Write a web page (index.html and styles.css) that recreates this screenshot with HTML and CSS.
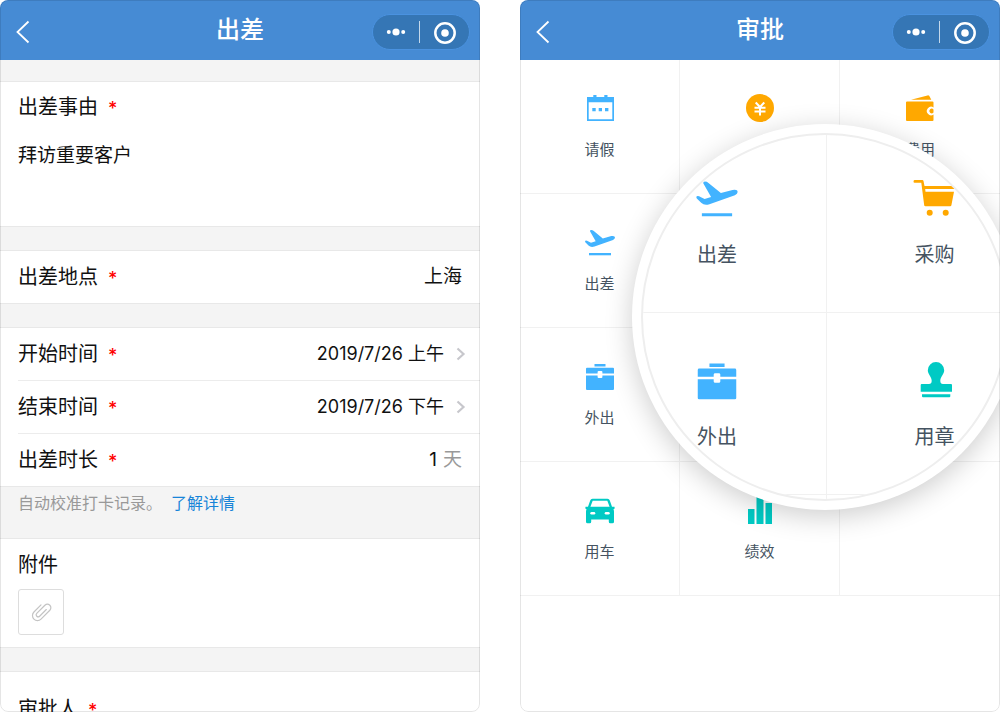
FILE: index.html
```html
<!DOCTYPE html>
<html lang="zh-CN">
<head>
<meta charset="utf-8">
<meta name="viewport" content="width=device-width, initial-scale=1">
<title>审批</title>
<link rel="stylesheet" href="styles.css">
</head>
<body>
<svg class="symbols" aria-hidden="true">
  <symbol id="back" viewBox="0 0 14 24"><path d="M12.500 1.500 1.500 12l11 10.500" fill="none" stroke="currentColor" stroke-width="1.800"/></symbol>
  <symbol id="more" viewBox="0 0 20 8"><circle cx="2.800" cy="4" r="2"/><circle cx="10" cy="4" r="3.600"/><circle cx="17.200" cy="4" r="2"/></symbol>
  <symbol id="target" viewBox="0 0 24 24"><circle cx="12" cy="12" r="9.700" fill="none" stroke="currentColor" stroke-width="2.500"/><circle cx="12" cy="12" r="3.800"/></symbol>
  <symbol id="next" viewBox="0 0 10 14"><path d="M1.500 1.500 7.500 7l-6 5.500" fill="none" stroke="currentColor" stroke-width="2.200"/></symbol>
  <symbol id="clip" viewBox="0 0 24 24"><g transform="rotate(45 12 12)" fill="none" stroke="currentColor" stroke-width="1.200" stroke-linecap="round"><path d="M7 7v10a5 5 0 0 0 10 0V4.500a3.500 3.500 0 0 0-7 0V16a2 2 0 0 0 4 0V6.500"/></g></symbol>
  <symbol id="calendar" viewBox="0 0 32 32"><path fill-rule="evenodd" d="M3 5h6.300V3h3.200v2h7.800V3h3.200v2H30v24H3zM4.700 10.300v17h23.600v-17z"/><path d="M8.300 16h3.400v3.300H8.300zM14.700 16H18v3.300h-3.300zM21 16h3.400v3.300H21z"/></symbol>
  <symbol id="yen" viewBox="0 0 32 32"><circle cx="16" cy="16" r="14"/><path d="M11.700 10.500 16 15l4.300-4.500M10.500 15.700h11M10.500 19.500h11M16 15v8.500" fill="none" stroke="#fff" stroke-width="2"/></symbol>
  <symbol id="wallet" viewBox="0 0 32 32"><path d="M7 7.700 23.500 3.400q1-.3 1.700.4l2.100 3.900z"/><path d="M3 9.500h25.500q1 0 1 1v4.900a4.300 4.300 0 1 0 0 7.200V28q0 1-1 1H3q-1 0-1-1V10.500q0-1 1-1z"/><path d="M29.500 17.600v2.800a2.300 2.300 0 1 1 0-2.800z"/></symbol>
  <symbol id="plane" viewBox="0 0 32 32"><path d="M6 5.200Q5.800 4 7.200 4q1.500 0 2.600 1l9 7.400 8.500-2.300q3.700-.7 3.700 1.500 0 1.500-2 2.400L10.500 20.500q-3.700 1.200-6-1L1.300 16.300Q.4 14.800 2 14.500q1 0 2 .8l3 1.500 4.700-1.500z"/><path d="M5 27h22v2.300H5z"/></symbol>
  <symbol id="briefcase" viewBox="0 0 32 32"><path d="M10.500 4h11v2.500h-11zM3 7.700h26q1 0 1 1v4.900H18.400V12q0-1-1-1h-2.800q-1 0-1 1v1.600H2V8.700q0-1 1-1zM2 15.400h11.600V17q0 1 1 1h2.800q1 0 1-1v-1.600H30V29q0 1-1 1H3q-1 0-1-1z"/></symbol>
  <symbol id="car" viewBox="0 0 32 32"><path fill-rule="evenodd" d="M8.500 4.700h15q1.700 0 2.300 1.700l2.200 6.300h2.500l.2 1.800-1.200.8q.5 1 .5 2.500v10q0 1.500-1.500 1.500h-2.200q-1.500 0-1.500-1.500v-2.300H7.200v2.300q0 1.500-1.500 1.500H3.500Q2 29.300 2 27.800v-10q0-1.500.5-2.500l-1.200-.8.200-1.800H4l2.200-6.300q.6-1.700 2.300-1.700zM8.700 6.700l-2.300 6h19.200l-2.300-6z"/><rect x="6.300" y="18" width="5" height="2.600" rx="1.300" fill="#fff"/><rect x="20.700" y="18" width="5" height="2.600" rx="1.300" fill="#fff"/></symbol>
  <symbol id="bars" viewBox="0 0 32 32"><path d="M4 15h6.500v15H4zM12.500 3h7v27h-7zM21.500 9H28v21h-6.500z"/></symbol>
  <symbol id="cart" viewBox="0 0 44 44"><path d="M1.500 4h7.800q1 0 1.200 1l1 5h30.200l-.5 3H12.200l.3 2.700H41l-2.600 13.500q-.2 1-1.200 1H12.500q-1.200 0-1.300-1L8.300 6.800H1.500q-1-.2-1-1.400 0-1.200 1-1.400z"/><circle cx="16.700" cy="36.700" r="3"/><circle cx="32.700" cy="36.700" r="3"/></symbol>
  <symbol id="stamp" viewBox="0 0 44 44"><path d="M23 4a8.200 8.200 0 0 1 8.200 8.200c0 4-3.900 6.500-3.900 10.500 0 2.300 1 3.300 2.700 3.300h8q1 0 1 1v6.700H7.700V27q0-1 1-1H16c1.700 0 2.700-1 2.700-3.300 0-4-3.900-6.500-3.900-10.500A8.200 8.200 0 0 1 23 4zM9 36.300h28.300v2q0 1-1 1H10q-1 0-1-1z"/></symbol>
</svg>

<main class="screens">
  <section class="phone" aria-label="出差">
    <header class="bar">
      <button class="bar-back" type="button" aria-label="返回"><svg class="i-back"><use href="#back"/></svg></button>
      <h1 class="bar-title">出差</h1>
      <div class="capsule">
        <button type="button" class="capsule-btn" aria-label="更多"><svg class="i-more"><use href="#more"/></svg></button>
        <button type="button" class="capsule-btn" aria-label="关闭"><svg class="i-target"><use href="#target"/></svg></button>
      </div>
    </header>
    <form class="form">
      <div class="group reason">
        <label class="label" for="reason">出差事由<span class="req">*</span></label>
        <textarea class="textarea" id="reason" rows="2">拜访重要客户</textarea>
      </div>
      <div class="group">
        <div class="row">
          <label class="label" for="place">出差地点<span class="req">*</span></label>
          <input class="value" id="place" type="text" value="上海">
        </div>
      </div>
      <div class="group">
        <div class="row">
          <label class="label" for="start">开始时间<span class="req">*</span></label>
          <button class="picker" id="start" type="button">2019/7/26 上午<svg class="i-next"><use href="#next"/></svg></button>
        </div>
        <div class="row">
          <label class="label" for="end">结束时间<span class="req">*</span></label>
          <button class="picker" id="end" type="button">2019/7/26 下午<svg class="i-next"><use href="#next"/></svg></button>
        </div>
        <div class="row">
          <label class="label" for="days">出差时长<span class="req">*</span></label>
          <input class="value" id="days" type="text" value="1"><span class="unit">天</span>
        </div>
      </div>
      <p class="hint">自动校准打卡记录。<a class="link" href="#">了解详情</a></p>
      <div class="group attach">
        <label class="label" for="file">附件</label>
        <button class="attach-btn" id="file" type="button"><svg class="i-clip"><use href="#clip"/></svg></button>
      </div>
      <div class="group approver">
        <span class="label">审批人<span class="req">*</span></span>
      </div>
    </form>
  </section>

  <section class="phone" aria-label="审批">
    <header class="bar">
      <button class="bar-back" type="button" aria-label="返回"><svg class="i-back"><use href="#back"/></svg></button>
      <h1 class="bar-title">审批</h1>
      <div class="capsule">
        <button type="button" class="capsule-btn" aria-label="更多"><svg class="i-more"><use href="#more"/></svg></button>
        <button type="button" class="capsule-btn" aria-label="关闭"><svg class="i-target"><use href="#target"/></svg></button>
      </div>
    </header>
    <nav class="apps">
      <a class="app" href="#"><svg class="icon blue"><use href="#calendar"/></svg>请假</a>
      <a class="app" href="#"><svg class="icon orange"><use href="#yen"/></svg></a>
      <a class="app" href="#"><svg class="icon orange"><use href="#wallet"/></svg>费用</a>
      <a class="app" href="#"><svg class="icon blue"><use href="#plane"/></svg>出差</a>
      <span class="app"></span>
      <span class="app"></span>
      <a class="app" href="#"><svg class="icon blue"><use href="#briefcase"/></svg>外出</a>
      <span class="app"></span>
      <span class="app"></span>
      <a class="app" href="#"><svg class="icon teal"><use href="#car"/></svg>用车</a>
      <a class="app" href="#"><svg class="icon teal"><use href="#bars"/></svg>绩效</a>
      <span class="app"></span>
    </nav>
    <div class="lens">
      <div class="lens-view">
        <div class="lens-grid">
          <a class="zoomed" href="#"><svg class="icon blue"><use href="#plane"/></svg>出差</a>
          <a class="zoomed" href="#"><svg class="icon orange"><use href="#cart"/></svg>采购</a>
          <a class="zoomed" href="#"><svg class="icon blue"><use href="#briefcase"/></svg>外出</a>
          <a class="zoomed" href="#"><svg class="icon teal"><use href="#stamp"/></svg>用章</a>
          <span class="zoomed"></span>
          <span class="zoomed"></span>
        </div>
      </div>
    </div>
  </section>
</main>
</body>
</html>
```

FILE: styles.css
```css
* { box-sizing: border-box; }

body {
  margin: 0;
  background: #fff;
  color: #111;
  font-family: Inter, "Noto Sans CJK SC", sans-serif;
}

button, input, textarea {
  margin: 0;
  padding: 0;
  border: 0;
  background: none;
  color: inherit;
  font: inherit;
}

a { color: inherit; text-decoration: none; }
svg { display: block; fill: currentColor; }
.symbols { position: absolute; width: 0; height: 0; }

.screens { display: flex; gap: 40px; height: 100vh; }

.phone {
  position: relative;
  display: flex;
  flex: 1;
  flex-direction: column;
  overflow: hidden;
  border-radius: 8px;
}

.phone::after {
  content: "";
  position: absolute;
  inset: 0;
  border: 1px solid rgba(0, 0, 0, 0.1);
  border-radius: 8px;
  pointer-events: none;
}

/* Title bar */
.bar {
  display: grid;
  flex: none;
  grid-template-columns: 1fr auto 1fr;
  align-items: center;
  height: 60px;
  padding: 4px 10px 0;
  background: #468bd4;
  color: #fff;
}

.bar-back { justify-self: start; padding: 0 6px; }
.i-back { width: 14px; height: 24px; }

.bar-title {
  margin: 0 0 4px;
  font-size: 24px;
  font-weight: 500;
  line-height: 32px;
}

.capsule {
  display: flex;
  justify-self: end;
  align-items: center;
  width: 98px;
  height: 36px;
  border: 1px solid #4a92e0;
  border-radius: 18px;
  background: #3576b5;
}

.capsule-btn {
  display: grid;
  flex: 1;
  height: 22px;
  place-items: center;
}

.capsule-btn:first-child { flex: none; width: 46px; }
.capsule-btn + .capsule-btn { border-left: 1px solid #c3d8eb; }
.i-more { width: 20px; height: 8px; }
.i-target { width: 24px; height: 24px; }

/* Form */
.form {
  display: flex;
  flex: 1;
  flex-direction: column;
  gap: 23px;
  min-height: 0;
  padding-top: 21px;
  background: #f4f4f4;
}

.group {
  flex: none;
  padding-left: 18px;
  border: solid #e8e8e8;
  border-width: 1px 0;
  background: #fff;
}

.label { font-size: 20px; line-height: 30px; }

.req {
  margin-left: 10px;
  color: #f00;
  font-size: 18px;
  font-weight: 500;
  vertical-align: -1px;
  line-height: 1;
}

.reason { display: flex; flex-direction: column; gap: 19px; padding-top: 10px; }

.textarea {
  height: 85px;
  font-size: 19px;
  line-height: 30px;
  resize: none;
}

.row {
  display: flex;
  align-items: center;
  height: 53px;
  padding-right: 18px;
}

.row:first-child { height: 52px; }
.row + .row { border-top: 1px solid #ececec; }
.row .label { flex: none; }

.value {
  flex: 1;
  min-width: 0;
  font-size: 19px;
  line-height: 30px;
  text-align: right;
}

.unit { margin-left: 6px; color: #999; font-size: 19px; line-height: 30px; }

.picker {
  display: flex;
  align-items: center;
  gap: 12px;
  margin-left: auto;
  margin-right: -4px;
  font-size: 18px;
  line-height: 30px;
}

.i-next { width: 10px; height: 14px; color: #c7c7cc; }

.hint {
  flex: none;
  height: 25px;
  margin: -20px 0 0;
  padding-left: 18px;
  color: #999;
  font-size: 16px;
  line-height: 26px;
}

.link { margin-left: 9px; color: #1784d8; }

.attach { display: flex; flex-direction: column; gap: 9px; padding-top: 11px; padding-bottom: 12px; }

.attach-btn {
  display: grid;
  width: 46px;
  height: 46px;
  border: 1px solid #ddd;
  border-radius: 3px;
  place-items: center;
}

.i-clip { width: 24px; height: 24px; color: #c4c4c4; }

.approver { padding-top: 22px; }

/* App grid */
.apps {
  display: grid;
  grid-template-columns: repeat(3, 1fr);
  grid-auto-rows: 134px;
}

.app, .zoomed {
  display: flex;
  flex-direction: column;
  align-items: center;
  border: solid #f1f1f1;
  border-width: 0 0 1px;
  color: #455361;
}

.app {
  gap: 15px;
  padding-top: 32px;
  border-right-width: 1px;
  font-size: 15px;
  line-height: 22px;
}

.app:nth-child(3n) { border-right-width: 0; }

.app .icon { width: 32px; height: 32px; }
.icon.blue { color: #42b3ff; }
.icon.orange { color: #ffa800; }
.icon.teal { color: #00cac4; }

/* Magnifier laid over the grid */
.lens {
  position: absolute;
  top: 124px;
  left: 112px;
  width: 386px;
  height: 386px;
  padding: 9px;
  border-radius: 50%;
  background: #fff;
  box-shadow: 0 6px 28px rgba(0, 0, 0, 0.2);
}

.lens-view {
  display: grid;
  height: 100%;
  overflow: hidden;
  border: 2px solid #eee;
  border-radius: 50%;
  place-content: center;
}

.lens-grid {
  display: grid;
  grid-template: 182px 182px 8px / 218px 216px;
}

.zoomed {
  gap: 21px;
  padding-top: 45px;
  font-size: 20px;
  line-height: 28px;
}

.zoomed:empty { padding: 0; border-bottom-width: 0; }
.zoomed:nth-child(even) { border-left-width: 1px; }
.zoomed .icon { width: 44px; height: 44px; }
```
